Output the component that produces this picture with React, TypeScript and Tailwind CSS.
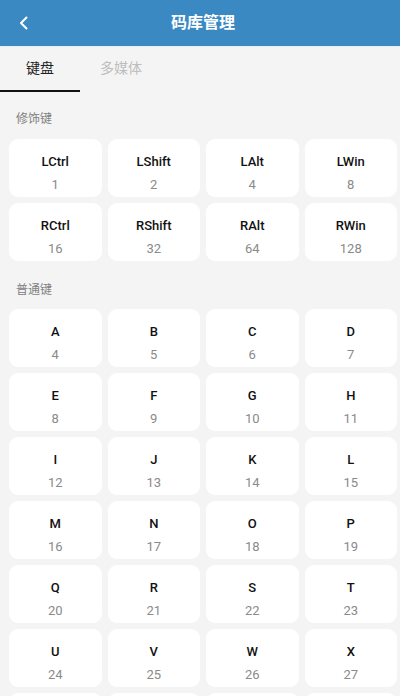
import React from "react";

const modKeys = [
  ["LCtrl", "1"],
  ["LShift", "2"],
  ["LAlt", "4"],
  ["LWin", "8"],
  ["RCtrl", "16"],
  ["RShift", "32"],
  ["RAlt", "64"],
  ["RWin", "128"],
];

const letters = "ABCDEFGHIJKLMNOPQRSTUVWX".split("").map((c, i) => [c, String(i + 4)]);

function Key({ name, code }: { name: string; code: string }) {
  return (
    <div className="h-[58px] rounded-[9px] bg-white flex flex-col items-center">
      <div className="mt-[15px] h-[16px] leading-[16px] text-[13px] font-medium text-[#111]">{name}</div>
      <div className="mt-[7px] h-[16px] leading-[16px] text-[13px] text-[#8a8a8a]">{code}</div>
    </div>
  );
}

export default function App() {
  return (
    <div
      className="w-[400px] h-[696px] overflow-hidden bg-[#f4f4f4]"
      style={{ fontFamily: 'Roboto, "Noto Sans CJK SC", sans-serif' }}
    >
      <div className="h-[46px] bg-[#3a89c3] relative flex items-center justify-center">
        <svg className="absolute left-[18px] top-[15px]" width="12" height="16" viewBox="0 0 12 16">
          <path d="M8.5 2.5 L3 8 L8.5 13.5" fill="none" stroke="#fff" strokeWidth="2" strokeLinecap="round" strokeLinejoin="round" />
        </svg>
        <div className="ml-[6px] text-white text-[16px] font-bold">码库管理</div>
      </div>
      <div className="h-[46px] flex border-t border-[#e8eef4]">
        <div className="w-[80px] flex flex-col">
          <div className="flex-1 flex items-center justify-center text-[14px] text-[#222]">键盘</div>
          <div className="h-[2px] bg-[#111]" />
        </div>
        <div className="w-[80px] ml-[1px] flex items-center justify-center pb-[2px] text-[14px] text-[#bdbdbd]">多媒体</div>
      </div>
      <div className="mt-[19px] pl-[16px] h-[16px] leading-[16px] text-[12px] text-[#808080]">修饰键</div>
      <div className="mt-[12px] pl-[9px] pr-[3px] grid grid-cols-4 gap-[6px]">
        {modKeys.map(([n, c]) => (
          <Key key={n} name={n} code={c} />
        ))}
      </div>
      <div className="mt-[21px] pl-[16px] h-[16px] leading-[16px] text-[12px] text-[#808080]">普通键</div>
      <div className="mt-[11px] pl-[9px] pr-[3px] grid grid-cols-4 gap-[6px]">
        {letters.map(([n, c]) => (
          <Key key={n} name={n} code={c} />
        ))}
        <div className="h-[58px] rounded-[9px] bg-white" />
        <div className="h-[58px] rounded-[9px] bg-white" />
        <div className="h-[58px] rounded-[9px] bg-white" />
        <div className="h-[58px] rounded-[9px] bg-white" />
      </div>
    </div>
  );
}
